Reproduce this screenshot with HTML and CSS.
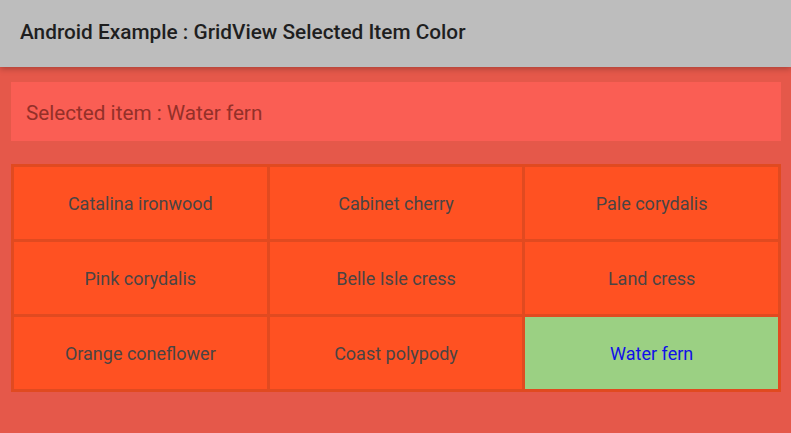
FILE: index.html
```html
<!DOCTYPE html>
<html>
<head>
<meta charset="utf-8">
<link rel="stylesheet" href="styles.css">
</head>
<body>
<header class="appbar">Android Example : GridView Selected Item Color</header>
<main class="content">
  <div class="selected">Selected item : Water fern</div>
  <div class="grid">
    <div class="cell">Catalina ironwood</div>
    <div class="cell">Cabinet cherry</div>
    <div class="cell">Pale corydalis</div>
    <div class="cell">Pink corydalis</div>
    <div class="cell">Belle Isle cress</div>
    <div class="cell">Land cress</div>
    <div class="cell">Orange coneflower</div>
    <div class="cell">Coast polypody</div>
    <div class="cell cell-active">Water fern</div>
  </div>
</main>
</body>
</html>
```
FILE: styles.css
```css
* { box-sizing: border-box; }
html, body { margin: 0; padding: 0; }
body {
  width: 791px;
  height: 433px;
  overflow: hidden;
  background: #e5584a;
  font-family: Roboto, "Noto Sans", sans-serif;
}
.appbar {
  position: relative;
  z-index: 1;
  height: 67px;
  background: #bdbdbd;
  color: #1f1f1f;
  font-size: 20.8px;
  font-weight: 500;
  line-height: 64px;
  padding-left: 20px;
  box-shadow: 0 2px 6px rgba(0,0,0,0.25);
}
.content {
  padding: 15px 10px 0 11px;
}
.selected {
  height: 59px;
  background: #fa5e54;
  color: #943029;
  font-size: 20.7px;
  line-height: 59px;
  padding: 2px 0 0 15px;
}
.grid {
  margin-top: 23px;
  display: grid;
  grid-template-columns: repeat(3, 1fr);
  gap: 3px;
  padding: 3px;
  background: #e14a20;
}
.cell {
  height: 72px;
  background: #ff5122;
  color: #4a4444;
  font-size: 18px;
  display: flex;
  align-items: center;
  justify-content: center;
}
.cell-active {
  background: #9bd083;
  color: #1010e8;
}
```
